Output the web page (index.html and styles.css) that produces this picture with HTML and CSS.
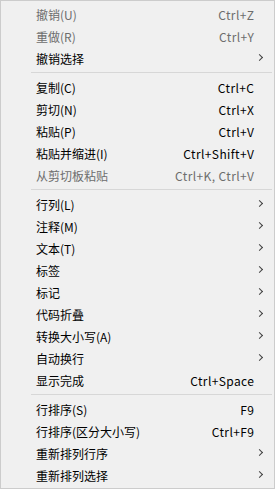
FILE: index.html
```html
<!DOCTYPE html>
<html lang="zh-CN">

<head>
    <meta charset="UTF-8">
    <meta name="viewport" content="width=device-width, initial-scale=1.0">
    <title>编辑菜单</title>
    <link rel="stylesheet" href="styles.css">
</head>

<body>
    <ul class="menu">
        <li class="item disabled"><span class="label">撤销(U)</span><span class="key">Ctrl+Z</span></li>
        <li class="item disabled"><span class="label">重做(R)</span><span class="key">Ctrl+Y</span></li>
        <li class="item sub"><span class="label">撤销选择</span><span class="key"></span></li>
        <li class="sep"></li>
        <li class="item"><span class="label">复制(C)</span><span class="key">Ctrl+C</span></li>
        <li class="item"><span class="label">剪切(N)</span><span class="key">Ctrl+X</span></li>
        <li class="item"><span class="label">粘贴(P)</span><span class="key">Ctrl+V</span></li>
        <li class="item"><span class="label">粘贴并缩进(I)</span><span class="key">Ctrl+Shift+V</span></li>
        <li class="item disabled"><span class="label">从剪切板粘贴</span><span class="key">Ctrl+K, Ctrl+V</span></li>
        <li class="sep"></li>
        <li class="item sub"><span class="label">行列(L)</span><span class="key"></span></li>
        <li class="item sub"><span class="label">注释(M)</span><span class="key"></span></li>
        <li class="item sub"><span class="label">文本(T)</span><span class="key"></span></li>
        <li class="item sub"><span class="label">标签</span><span class="key"></span></li>
        <li class="item sub"><span class="label">标记</span><span class="key"></span></li>
        <li class="item sub"><span class="label">代码折叠</span><span class="key"></span></li>
        <li class="item sub"><span class="label">转换大小写(A)</span><span class="key"></span></li>
        <li class="item sub"><span class="label">自动换行</span><span class="key"></span></li>
        <li class="item"><span class="label">显示完成</span><span class="key">Ctrl+Space</span></li>
        <li class="sep"></li>
        <li class="item"><span class="label">行排序(S)</span><span class="key">F9</span></li>
        <li class="item"><span class="label">行排序(区分大小写)</span><span class="key">Ctrl+F9</span></li>
        <li class="item sub"><span class="label">重新排列行序</span><span class="key"></span></li>
        <li class="item sub"><span class="label">重新排列选择</span><span class="key"></span></li>
    </ul>
</body>

</html>
```

FILE: styles.css
```css
body {
    margin: 0;
    font-family: "Noto Sans CJK SC", "Noto Sans", sans-serif;
    font-size: 12px;
    color: #000;
}

/* Menu box */
.menu {
    list-style: none;
    margin: 0;
    padding: 2px 0;
    width: 275px;
    height: 489px;
    box-sizing: border-box;
    border: 1px solid #cccccc;
    background-color: #f0f0f0;
}

.item {
    display: flex;
    align-items: center;
    height: 22px;
    padding-left: 35px;
    padding-right: 20px;
}

.label {
    flex: 1;
    white-space: nowrap;
}

.key {
    white-space: nowrap;
    letter-spacing: 0.4px;
    margin-right: -0.4px;
}

.disabled {
    color: #6d6d6d;
}

/* Submenu arrow */
.sub {
    position: relative;
}

.sub::after {
    content: "";
    position: absolute;
    right: 12px;
    top: 8px;
    width: 4px;
    height: 4px;
    border-top: 1px solid #404040;
    border-right: 1px solid #404040;
    transform: rotate(45deg);
}

.sep {
    height: 1px;
    margin: 3px 2px 3px 30px;
    background-color: #d7d7d7;
}
```
